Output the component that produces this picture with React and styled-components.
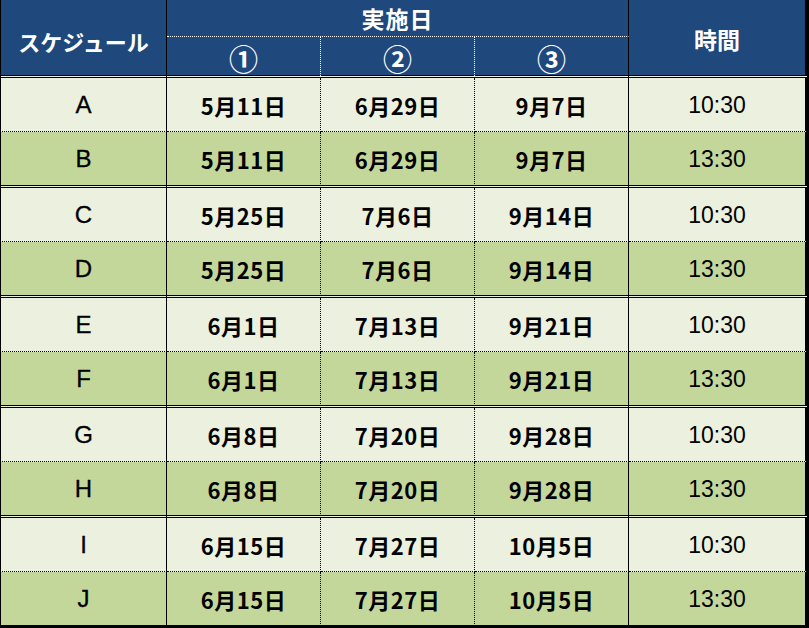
import React from "react";
import styled, { createGlobalStyle, css } from "styled-components";

const GlobalStyle = createGlobalStyle`
  html, body { margin: 0; padding: 0; background: #ffffff; }
  #root { width: 809px; height: 628px; }
`;

const HEAD = "#1f497d";
const LIGHT = "#ebf1de";
const GREEN = "#c4d79b";

const Sheet = styled.div`
  display: grid;
  width: 809px;
  height: 628px;
  grid-template-columns: 167px 154px 154px 154px 180px;
  grid-template-rows: 37px 41px repeat(5, 54px 56px);
  box-sizing: border-box;
`;

const rightBorder = {
  solid: "1px solid #000",
  dotted: "1px dotted #000",
  dottedWhite: "1px dotted #fff",
  edge: "4px solid #000",
};

const bottomBorder = {
  dotted: "1px dotted #000",
  dottedWhite: "1px dotted #fff",
  double: "3px double #000",
  edge: "3px solid #000",
};

const fonts = {
  head: css`
    font-family: "Noto Sans CJK JP", "Noto Sans", sans-serif;
    font-weight: 700;
    font-size: 22px;
    color: #ffffff;
  `,
  circled: css`
    font-family: "Noto Sans CJK JP", "Noto Sans", sans-serif;
    font-weight: 700;
    font-size: 29px;
    color: #ffffff;
  `,
  letter: css`
    font-family: "Liberation Sans", Arial, sans-serif;
    font-weight: 400;
    font-size: 24px;
    color: #000;
    -webkit-text-stroke: 0.3px #000;
  `,
  date: css`
    font-family: "Noto Sans CJK JP", "Noto Sans", sans-serif;
    font-weight: 700;
    font-size: 22px;
    letter-spacing: 0.5px;
    color: #000;
  `,
  time: css`
    font-family: "Liberation Sans", Arial, sans-serif;
    font-weight: 400;
    font-size: 23px;
    color: #000;
  `,
};

const Cell = styled.div`
  box-sizing: border-box;
  display: flex;
  align-items: center;
  justify-content: center;
  padding-top: ${(p) => p.$shift ?? 1}px;
  line-height: 1;
  white-space: nowrap;
  grid-column: ${(p) => p.$col || "auto"};
  grid-row: ${(p) => p.$row || "auto"};
  border-left: ${(p) => (p.$left ? "1px solid #000" : "none")};
  border-right: ${(p) => rightBorder[p.$right] || "none"};
  border-bottom: ${(p) => bottomBorder[p.$bottom] || "none"};
  background: ${(p) =>
    p.$bottom === "double"
      ? `linear-gradient(to bottom, ${p.$bg} calc(100% - 3px), ${LIGHT} calc(100% - 3px)) border-box`
      : `${p.$bg}`};
  ${(p) => fonts[p.$font]}
`;

const schedule = [
  ["A", "5月11日", "6月29日", "9月7日", "10:30"],
  ["B", "5月11日", "6月29日", "9月7日", "13:30"],
  ["C", "5月25日", "7月6日", "9月14日", "10:30"],
  ["D", "5月25日", "7月6日", "9月14日", "13:30"],
  ["E", "6月1日", "7月13日", "9月21日", "10:30"],
  ["F", "6月1日", "7月13日", "9月21日", "13:30"],
  ["G", "6月8日", "7月20日", "9月28日", "10:30"],
  ["H", "6月8日", "7月20日", "9月28日", "13:30"],
  ["I", "6月15日", "7月27日", "10月5日", "10:30"],
  ["J", "6月15日", "7月27日", "10月5日", "13:30"],
];

const colRight = ["solid", "dotted", "dotted", "solid", "edge"];
const colFont = ["letter", "date", "date", "date", "time"];

export default function App() {
  return (
    <>
      <GlobalStyle />
      <Sheet>
        <Cell $col="1" $row="1 / span 2" $left $right="solid" $bottom="double" $bg={HEAD} $font="head" $shift={6}>
          スケジュール
        </Cell>
        <Cell $col="2 / span 3" $row="1" $right="solid" $bottom="dottedWhite" $bg={HEAD} $font="head" $shift={0}>
          <span style={{ letterSpacing: "1px", fontSize: "23px" }}>実施日</span>
        </Cell>
        <Cell $col="5" $row="1 / span 2" $right="edge" $bottom="double" $bg={HEAD} $font="head" $shift={4}>
          <span style={{ fontSize: "23px" }}>時間</span>
        </Cell>
        {["①", "②", "③"].map((n, i) => (
          <Cell
            key={n}
            $col={String(i + 2)}
            $row="2"
            $right={i === 2 ? "solid" : "dottedWhite"}
            $bottom="double"
            $bg={HEAD}
            $font="circled"
            $shift={5}
          >
            {n}
          </Cell>
        ))}
        {schedule.map((row, r) =>
          row.map((text, c) => (
            <Cell
              key={`${r}-${c}`}
              $left={c === 0}
              $right={colRight[c]}
              $bottom={r % 2 === 0 ? "dotted" : r === schedule.length - 1 ? "edge" : "double"}
              $bg={r % 2 === 0 ? LIGHT : GREEN}
              $font={colFont[c]}
            >
              {text}
            </Cell>
          ))
        )}
      </Sheet>
    </>
  );
}
